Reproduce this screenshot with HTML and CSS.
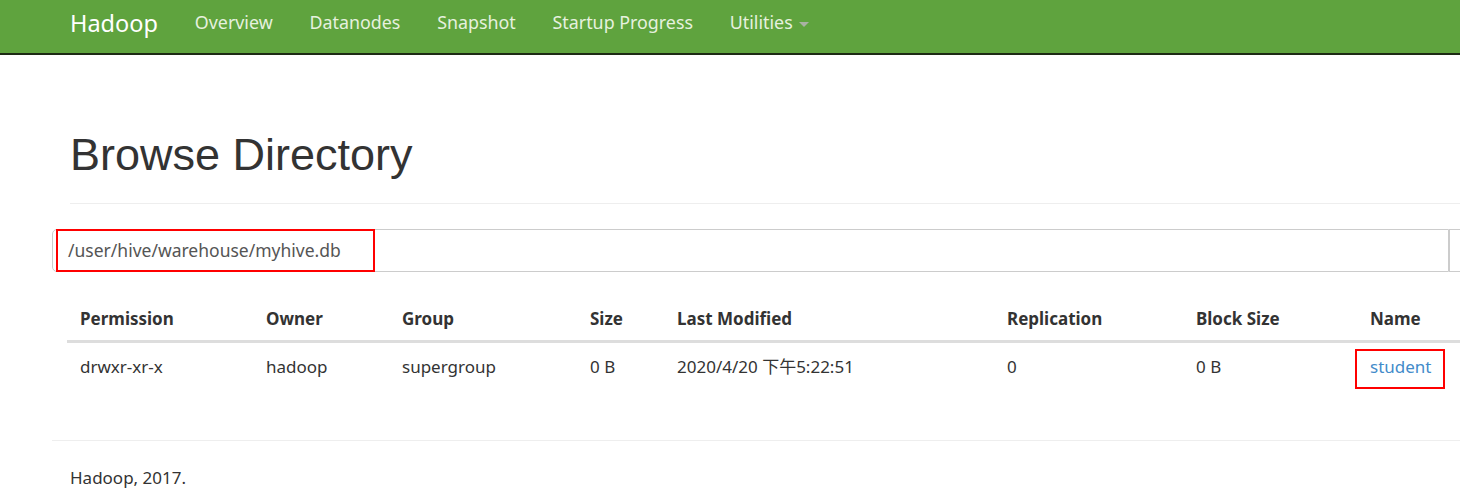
FILE: index.html
```html
<!DOCTYPE html>
<html>
<head>
<meta charset="utf-8">
<title>Browsing HDFS</title>
<link rel="stylesheet" href="styles.css">
</head>
<body>
<nav class="navbar">
  <a class="brand" href="#">Hadoop</a>
  <ul class="nav">
    <li><a href="#">Overview</a></li>
    <li><a href="#">Datanodes</a></li>
    <li><a href="#">Snapshot</a></li>
    <li><a href="#">Startup Progress</a></li>
    <li><a href="#">Utilities <span class="caret"></span></a></li>
  </ul>
</nav>
<div class="container">
  <div class="page-header">
    <h1>Browse Directory</h1>
  </div>
  <div class="input-group">
    <div class="path-input"><span class="hl-path">/user/hive/warehouse/myhive.db</span></div>
    <div class="go-btn"></div>
  </div>
  <table class="listing">
    <colgroup>
      <col class="c1"><col class="c2"><col class="c3"><col class="c4"><col class="c5"><col class="c6"><col class="c7"><col class="c8">
    </colgroup>
    <thead>
      <tr>
        <th>Permission</th><th>Owner</th><th>Group</th><th>Size</th><th>Last Modified</th><th>Replication</th><th>Block Size</th><th>Name</th>
      </tr>
    </thead>
    <tbody>
      <tr>
        <td>drwxr-xr-x</td><td>hadoop</td><td>supergroup</td><td>0 B</td><td>2020/4/20 下午5:22:51</td><td>0</td><td>0 B</td><td><a class="hl-link" href="#">student</a></td>
      </tr>
    </tbody>
  </table>
  <hr class="foot-rule">
  <footer class="footer">Hadoop, 2017.</footer>
</div>
</body>
</html>
```
FILE: styles.css
```css
html, body {
  margin: 0;
  padding: 0;
  overflow: hidden;
  background: #fff;
}
body {
  font-family: "Noto Sans", "Noto Sans CJK SC", sans-serif;
  font-size: 17px;
  color: #333;
}
.navbar {
  height: 53px;
  background: #5fa33e;
  border-bottom: 2px solid #1d2a14;
  display: flex;
  align-items: center;
  padding-left: 70px;
  box-sizing: content-box;
}
.brand {
  color: #fff;
  font-size: 23.5px;
  text-decoration: none;
  margin-right: 18.5px;
  margin-top: -8px;
}
.nav {
  list-style: none;
  display: flex;
  margin: 0;
  padding: 0;
  margin-top: -9px;
}
.nav a {
  display: block;
  color: #e6f1df;
  text-decoration: none;
  font-size: 17.85px;
  padding: 0 18.4px;
}
.caret {
  display: inline-block;
  width: 0;
  height: 0;
  border-left: 5px solid transparent;
  border-right: 5px solid transparent;
  border-top: 5px solid #a9b2a3;
  vertical-align: middle;
  margin-left: 2px;
}
.container {
  margin-left: 52px;
  width: 1500px;
}
.page-header {
  margin: 0 0 0 18px;
  padding-top: 72px;
  border-bottom: 1px solid #eee;
  padding-bottom: 20px;
}
.page-header h1 {
  margin: 0;
  font-family: "Liberation Sans", Arial, sans-serif;
  font-weight: 400;
  font-size: 45px;
  line-height: 56px;
  color: #333;
}
.input-group {
  display: flex;
  margin-top: 25px;
  height: 43px;
}
.path-input {
  width: 1397px;
  border: 1px solid #ccc;
  border-radius: 5px 0 0 5px;
  box-sizing: border-box;
  display: flex;
  align-items: center;
}
.hl-path {
  display: flex;
  align-items: center;
  height: 43px;
  box-sizing: border-box;
  margin-left: 3px;
  margin-top: -1px;
  padding: 0 0 0 10px;
  width: 319px;
  border: 2px solid #f00;
  color: #555;
  font-size: 17.5px;
}
.go-btn {
  flex: 1;
  border: 1px solid #ccc;
  box-sizing: border-box;
}
.listing {
  margin-left: 15px;
  margin-top: 29px;
  border-collapse: collapse;
  table-layout: fixed;
  width: 1450px;
}
.c1 { width: 186px; }
.c2 { width: 136px; }
.c3 { width: 188px; }
.c4 { width: 87px; }
.c5 { width: 330px; }
.c6 { width: 189px; }
.c7 { width: 174px; }
.listing th {
  text-align: left;
  font-weight: 700;
  padding: 6px 13px 9px;
  border-bottom: 3px solid #ddd;
  line-height: 24px;
}
.listing td {
  padding: 10px 13px 10px;
  line-height: 24px;
  white-space: nowrap;
}
.hl-link {
  display: inline-block;
  color: #428bca;
  text-decoration: none;
  border: 2px solid #f00;
  padding: 4px 12px 8px 13px;
  margin: -4px 0 -9px -15px;
}
.foot-rule {
  margin: 50px 0 0 0;
  border: 0;
  border-top: 1px solid #eee;
}
.footer {
  padding-left: 18px;
  margin-top: 25px;
  font-size: 17px;
}
```
